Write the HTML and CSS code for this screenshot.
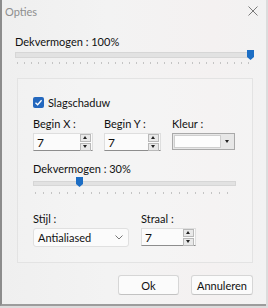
FILE: index.html
```html
<!DOCTYPE html>
<html lang="nl">
<head>
    <meta charset="UTF-8">
    <title>Opties</title>
    <link rel="stylesheet" href="styles.css">
</head>
<body>
    <div class="window">
        <div class="titlebar">
            <span class="title">Opties</span>
            <svg class="close" width="10" height="10" viewBox="0 0 10 10">
                <path d="M0.5 0.5 L9.5 9.5 M9.5 0.5 L0.5 9.5" stroke="#7a7a7a" stroke-width="1"/>
            </svg>
        </div>
        <div class="main">
            <div class="label first">Dekvermogen : 100%</div>
            <div class="slider">
                <div class="track"></div>
                <svg class="thumb" style="left:232px" width="7" height="10" viewBox="0 0 7 10">
                    <path d="M0 0 H7 V7 L3.5 10 L0 7 Z" fill="#1d6ec4"/>
                </svg>
                <div class="ticks"></div>
            </div>

            <div class="group">
                <label class="check">
                    <span class="box">
                        <svg width="9" height="9" viewBox="0 0 9 9">
                            <path d="M1.5 4.8 L3.6 6.8 L7.6 2.2" fill="none" stroke="#fff" stroke-width="1.3"/>
                        </svg>
                    </span>
                    Slagschaduw
                </label>

                <div class="row">
                    <div class="field w-x">
                        <div class="label">Begin X :</div>
                        <div class="input">
                            <span class="value">7</span>
                            <div class="spin"><span class="up"></span><span class="down"></span></div>
                        </div>
                    </div>
                    <div class="field w-y">
                        <div class="label">Begin Y :</div>
                        <div class="input">
                            <span class="value">7</span>
                            <div class="spin"><span class="up"></span><span class="down"></span></div>
                        </div>
                    </div>
                    <div class="field w-color">
                        <div class="label">Kleur :</div>
                        <div class="combo">
                            <span class="swatch"></span>
                            <span class="drop"></span>
                        </div>
                    </div>
                </div>

                <div class="label opacity">Dekvermogen : 30%</div>
                <div class="slider small">
                    <div class="track"></div>
                    <svg class="thumb" style="left:43px" width="7" height="10" viewBox="0 0 7 10">
                        <path d="M0 0 H7 V7 L3.5 10 L0 7 Z" fill="#1d6ec4"/>
                    </svg>
                    <div class="ticks"></div>
                </div>

                <div class="row bottom">
                    <div class="field w-style">
                        <div class="label">Stijl :</div>
                        <div class="select">
                            <span class="value">Antialiased</span>
                            <svg width="8" height="5" viewBox="0 0 8 5">
                                <path d="M0.5 0.5 L4 4 L7.5 0.5" fill="none" stroke="#777" stroke-width="1"/>
                            </svg>
                        </div>
                    </div>
                    <div class="field w-radius">
                        <div class="label">Straal :</div>
                        <div class="input">
                            <span class="value">7</span>
                            <div class="spin"><span class="up"></span><span class="down"></span></div>
                        </div>
                    </div>
                </div>
            </div>

            <div class="actions">
                <button class="ok">Ok</button>
                <button class="cancel">Annuleren</button>
            </div>
        </div>
    </div>
</body>
</html>
```

FILE: styles.css
```css
body {
    margin: 0;
    font-family: Lato, "Noto Sans", sans-serif;
    font-size: 11px;
    color: #111;
    background: #dcdcdc;
}
.window {
    width: 266px;
    height: 306px;
    box-sizing: border-box;
    border-left: 2px solid #8c8c8c;
    border-bottom: 2px solid #9c9c9c;
    background: linear-gradient(90deg, #efefef 0%, #f3f3f3 40%, #f4f1f1 80%, #f2f2f2 100%);
    display: flex;
    flex-direction: column;
}
.titlebar {
    height: 22px;
    padding: 0 8px 0 3px;
    display: flex;
    align-items: center;
    justify-content: space-between;
}
.title {
    color: #8e8e8e;
}
.main {
    padding: 0 13px 0 13px;
    display: flex;
    flex-direction: column;
}
.label {
    height: 14px;
    line-height: 14px;
    white-space: nowrap;
}
.label.first {
    margin-top: 13px;
}
.slider {
    position: relative;
    height: 14px;
    margin-top: 1px;
}
.slider .track {
    margin-top: 2px;
    height: 4px;
    background: #e2e2e2;
    border: 1px solid #d6d6d6;
}
.slider .thumb {
    position: absolute;
    top: 0;
}
.slider .ticks {
    position: absolute;
    left: 2px;
    right: 2px;
    top: 12px;
    height: 2px;
    background: repeating-linear-gradient(90deg, #c4c4c4 0 1px, transparent 1px 7px);
}
.group {
    margin: 14px 0 0 2px;
    border: 1px solid #e3e3e3;
    padding: 16px 0 15px 15px;
    display: flex;
    flex-direction: column;
    background: rgba(255, 255, 255, 0.15);
}
.check {
    display: flex;
    align-items: center;
    gap: 4px;
    height: 14px;
}
.check .box {
    width: 11px;
    height: 11px;
    border-radius: 2px;
    background: #2468be;
    display: flex;
    align-items: center;
    justify-content: center;
}
.row {
    display: flex;
    gap: 11px;
    margin-top: 8px;
}
.row.bottom {
    margin-top: 21px;
    gap: 12px;
}
.field {
    display: flex;
    flex-direction: column;
    gap: 2px;
}
.w-x { width: 60px; }
.w-y { width: 57px; }
.w-color { width: 63px; }
.w-style { width: 96px; }
.w-radius { width: 55px; }
.input {
    height: 18px;
    box-sizing: border-box;
    display: flex;
    align-items: center;
    justify-content: space-between;
    background: #fbfbfb;
    border: 1px solid #dedede;
    border-bottom-color: #8d8d8d;
    padding: 0 1px 0 3px;
    font-size: 12px;
}
.spin {
    display: flex;
    flex-direction: column;
    gap: 1px;
}
.spin span {
    width: 9px;
    height: 6px;
    background: #e9e9e9;
    border: 1px solid #b9b9b9;
    position: relative;
}
.spin span::after {
    content: "";
    position: absolute;
    left: 2px;
    top: 1px;
    border-left: 2.5px solid transparent;
    border-right: 2.5px solid transparent;
}
.spin .up::after {
    border-bottom: 3px solid #222;
}
.spin .down::after {
    border-top: 3px solid #222;
}
.combo {
    height: 17px;
    box-sizing: border-box;
    display: flex;
    border: 1px solid #a9a9a9;
    background: #e7e7e7;
    padding: 1px;
    gap: 1px;
}
.combo .swatch {
    flex: 1;
    background: #fdfdfd;
    border: 1px solid #cfcfcf;
}
.combo .drop {
    width: 11px;
    position: relative;
}
.combo .drop::after {
    content: "";
    position: absolute;
    left: 3px;
    top: 5px;
    border-left: 2.5px solid transparent;
    border-right: 2.5px solid transparent;
    border-top: 3px solid #222;
}
.label.opacity {
    margin-top: 11px;
}
.slider.small {
    width: 203px;
}
.slider.small .track {
    margin-top: 4px;
    height: 3px;
}
.slider.small .ticks {
    top: 15px;
    background: repeating-linear-gradient(90deg, #c4c4c4 0 1px, transparent 1px 8px);
}
.select {
    height: 19px;
    box-sizing: border-box;
    display: flex;
    align-items: center;
    justify-content: space-between;
    background: #fbfbfb;
    border: 1px solid #e0e0e0;
    border-radius: 3px;
    padding: 0 5px 0 4px;
}
.actions {
    margin-top: 12px;
    display: flex;
    justify-content: flex-end;
    gap: 12px;
}
.actions button {
    height: 20px;
    font-family: inherit;
    font-size: 11px;
    color: #111;
    background: #fbfbfb;
    border: 1px solid #d6d6d6;
    border-bottom-color: #c2c2c2;
    border-radius: 3px;
    padding: 0;
}
.actions .ok { width: 61px; }
.actions .cancel { width: 62px; }
```
